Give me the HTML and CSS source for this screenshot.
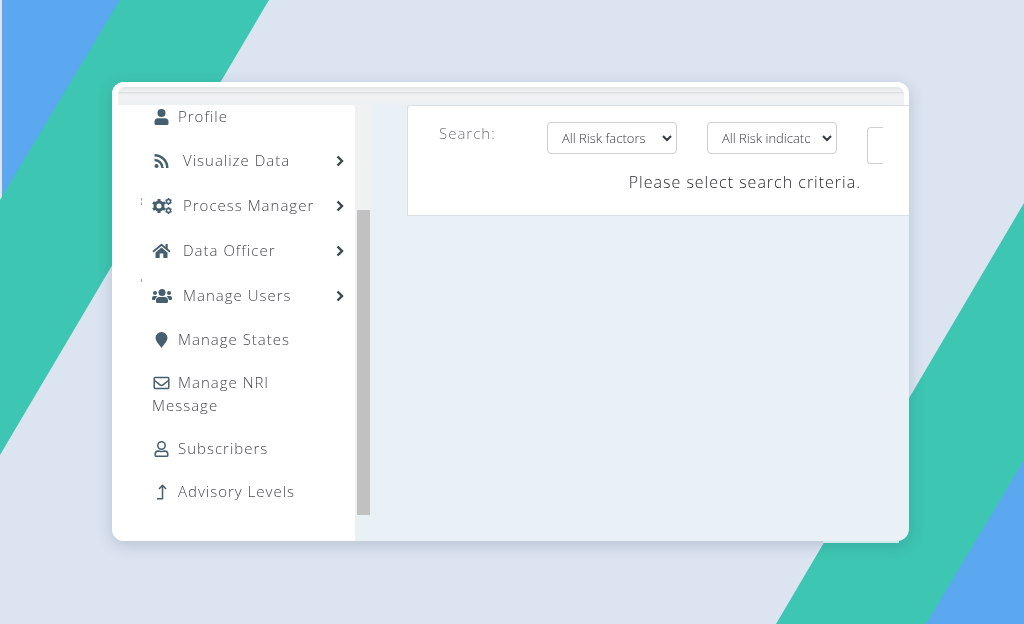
FILE: index.html
```html
<!DOCTYPE html>
<html lang="en">

<head>
  <meta charset="UTF-8">
  <meta name="viewport" content="width=device-width, initial-scale=1.0">
  <title>Risk Search</title>
  <link rel="stylesheet" href="styles.css">
</head>

<body>
  <svg class="backdrop" viewBox="0 0 1024 624" preserveAspectRatio="none" aria-hidden="true">
    <path fill="#5ba8f1" d="M2 0H121L2 201zM1024 459V624H925z"/>
    <path fill="#3dc6b1" d="M120 0H269L0 455V200zM1024 203V460L926 624H776z"/>
  </svg>

  <main class="window">
    <div class="window-top"></div>
    <div class="layout">
      <nav class="sidebar">
        <ul class="menu">
          <li>
            <a href="#profile"><svg class="icon" viewBox="0 0 20 16"><circle cx="9.500" cy="4" r="4"/><path d="M6 9.200h7a3.500 3.500 0 0 1 3.500 3.500v1.800a1.500 1.500 0 0 1-1.500 1.500h-11a1.500 1.500 0 0 1-1.500-1.500v-1.800a3.500 3.500 0 0 1 3.500-3.500z"/></svg>Profile</a>
          </li>
          <li>
            <button type="button"><svg class="icon" viewBox="0 0 20 16"><circle cx="4.500" cy="13" r="2"/><path class="line thick" d="M2.500 7a8 8 0 0 1 8 8M2.500 2.200a12.800 12.800 0 0 1 12.800 12.800"/></svg>Visualize Data<svg class="arrow" viewBox="0 0 8 12"><path d="M1.500 1.500L6 6l-4.500 4.500"/></svg></button>
          </li>
          <li class="mark">
            <button type="button"><svg class="icon" viewBox="0 0 20 16"><circle class="line gear" cx="7" cy="8" r="4"/><path class="line teeth" d="M7 1v2.500M7 12.500V15M1 4.500l2.200 1.300M10.800 10.200L13 11.500M1 11.500l2.200-1.300M10.800 5.800L13 4.500"/><circle class="line small" cx="16.500" cy="3.500" r="2"/><circle class="line small" cx="16.500" cy="12.500" r="2"/><path class="line small" d="M16.500 0v1M16.500 6v1M13.500 1.800l1 .6M18.500 4.600l1 .6M13.500 5.200l1-.6M18.500 2.400l1-.6M16.500 9v1M16.500 15v1M13.500 10.800l1 .6M18.500 13.600l1 .6M13.500 14.200l1-.6M18.500 11.400l1-.6"/></svg>Process Manager<svg class="arrow" viewBox="0 0 8 12"><path d="M1.500 1.500L6 6l-4.500 4.500"/></svg></button>
          </li>
          <li>
            <button type="button"><svg class="icon" viewBox="0 0 20 16"><path d="M9.500 4.500l6 5V14.500a.6.600 0 0 1-.6.600H11.300V10.500H7.700v4.600H4.100a.6.600 0 0 1-.6-.6v-5z"/><path class="line roof" d="M1 8.800L9.500 1.800l8.500 7"/><path d="M13.500 1h2.200v5.200L13.500 4.400z"/></svg>Data Officer<svg class="arrow" viewBox="0 0 8 12"><path d="M1.500 1.500L6 6l-4.500 4.500"/></svg></button>
          </li>
          <li class="mark low">
            <button type="button"><svg class="icon" viewBox="0 0 20 16"><circle cx="3" cy="5" r="2"/><circle cx="17" cy="5" r="2"/><circle cx="10" cy="4.500" r="3.500"/><path d="M7.500 9h5a3.500 3.500 0 0 1 3.500 3.500v1a1.500 1.500 0 0 1-1.500 1.500h-9a1.500 1.500 0 0 1-1.500-1.500v-1a3.500 3.500 0 0 1 3.500-3.500zM2 8h2a2 2 0 0 1 1.400.6A5.500 5.500 0 0 0 3 12H1a1 1 0 0 1-1-1v-1a2 2 0 0 1 2-2zM18 8h-2a2 2 0 0 0-1.400.6A5.500 5.500 0 0 1 17 12h2a1 1 0 0 0 1-1v-1a2 2 0 0 0-2-2z"/></svg>Manage Users<svg class="arrow" viewBox="0 0 8 12"><path d="M1.500 1.500L6 6l-4.500 4.500"/></svg></button>
          </li>
          <li>
            <a href="#states"><svg class="icon" viewBox="0 0 20 16"><path d="M9.500 16C8.500 14 3.500 9.500 3.500 6a6 6 0 0 1 12 0c0 3.500-5 8-6 10z"/></svg>Manage States</a>
          </li>
          <li>
            <a href="#message"><svg class="icon" viewBox="0 0 20 16"><rect class="line" x="2.200" y="2.500" width="14.600" height="11" rx="1"/><path class="line" d="M2.500 5.500l5.500 4.300a2.400 2.400 0 0 0 3 0L16.500 5.500"/></svg>Manage NRI Message</a>
          </li>
          <li>
            <a href="#subscribers"><svg class="icon" viewBox="0 0 20 16"><circle class="line" cx="9.500" cy="4.500" r="3.700"/><path class="line" d="M6.300 10c1.200 0 1.700.5 3.200.5s2-.5 3.200-.5a3.200 3.200 0 0 1 3.100 3.200v1.100a1 1 0 0 1-1 1H4.200a1 1 0 0 1-1-1v-1.100A3.200 3.200 0 0 1 6.300 10z"/></svg>Subscribers</a>
          </li>
          <li>
            <a href="#levels"><svg class="icon" viewBox="0 0 20 16"><path class="line" d="M5 14.700H10.500V1.500M7 5L10.500 1.300 14 5"/></svg>Advisory Levels</a>
          </li>
        </ul>
      </nav>
      <div class="scrollbar"><div class="thumb"></div></div>

      <section class="content">
        <form class="search-panel">
          <div class="filters">
            <label for="factor">Search:</label>
            <select id="factor">
              <option>All Risk factors</option>
            </select>
            <select id="indicator" aria-label="Risk indicator">
              <option>All Risk indicators</option>
            </select>
            <input type="text" aria-label="Keyword">
          </div>
          <p class="message">Please select search criteria.</p>
        </form>
      </section>
    </div>
  </main>
</body>

</html>
```
FILE: styles.css
```css
* {
  margin: 0;
  padding: 0;
  box-sizing: border-box;
  font-family: 'Open Sans', sans-serif;
}

body {
  background: #dce4f1;
  color: #44494d;
  font-weight: 300;
  min-height: 100vh;
  display: flex;
  padding: 82px 115px 83px 112px;
}

.backdrop {
  position: fixed;
  top: 0;
  left: 0;
  width: 100%;
  height: 100%;
  z-index: -1;
}

.window {
  position: relative;
  flex: 1;
  display: flex;
  flex-direction: column;
  background: #e9f1f7;
  border-radius: 12px;
  box-shadow: 0 4px 16px rgba(40, 60, 90, 0.2);
}

/* pale edge under the lower right corner */
.window::after {
  content: '';
  position: absolute;
  right: 10px;
  bottom: -2px;
  width: 76px;
  height: 2px;
  background: #cfe9ea;
}

.window-top {
  height: 23px;
  border: solid #fff;
  border-width: 5px 5px 0 6px;
  border-radius: 12px 12px 0 0;
  background: linear-gradient(#e3e6e6, #f0f2f2 5px, #dddfe0 5px, #dddfe0 6px, #f0f1f2 7px, #edf1f3);
}

.layout {
  flex: 1;
  display: flex;
}

.sidebar {
  flex: 0 0 243px;
  background: #fff;
  border-radius: 0 3px 0 12px;
  padding: 0 11px 26px 40px;
}

.menu {
  list-style: none;
}

.menu li {
  position: relative;
  padding: 10px 0;
}

.menu li:first-child {
  padding-top: 0;
}

.menu a,
.menu button {
  display: block;
  color: #44494d;
  font-size: 15px;
  font-weight: 300;
  line-height: 23px;
  letter-spacing: 1px;
  text-decoration: none;
}

.menu a {
  padding-right: 40px;
}

.menu button {
  display: flex;
  align-items: center;
  width: 100%;
  height: 25px;
  border: none;
  background: none;
  cursor: pointer;
}

.icon {
  width: 20px;
  height: 16px;
  margin-right: 6px;
  vertical-align: -3px;
  fill: #455f6e;
}

.menu button .icon {
  margin-right: 11px;
}

.line {
  fill: none;
  stroke: #455f6e;
  stroke-width: 1.5;
  stroke-linejoin: round;
}

.thick {
  stroke-width: 2.4;
}

.roof {
  stroke-width: 1.8;
}

.gear {
  stroke-width: 3;
}

.teeth {
  stroke-width: 3;
}

.small {
  stroke-width: 1.5;
}

.arrow {
  width: 8px;
  height: 12px;
  margin-left: auto;
  fill: none;
  stroke: #37474f;
  stroke-width: 2.4;
}

.mark::before {
  content: '';
  position: absolute;
  left: -11px;
  top: 15px;
  height: 7px;
  border-left: 1px dashed #9a9fa2;
}

.mark.low::before {
  top: 6px;
  height: 3px;
  border-left-style: solid;
}

.scrollbar {
  flex: 0 0 15px;
  display: flex;
  padding: 105px 0 26px 2px;
  background: linear-gradient(#f0f1f2 105px, #f0f1f2 410px, #e9f1f5 410px);
}

.thumb {
  flex: 1;
  background: #c1c1c1;
}

.content {
  flex: 1;
  min-width: 0;
  padding-left: 37px;
}

.search-panel {
  background: #fff;
  border: 1px solid #d9dfe3;
  border-right: none;
  border-radius: 3px 0 0 0;
  padding: 16px 24px 19px 31px;
}

.filters {
  display: flex;
  gap: 30px;
}

.filters label {
  width: 78px;
  color: #6f7477;
  font-size: 15px;
  line-height: 22px;
  letter-spacing: 1px;
}

.filters select {
  appearance: none;
  width: 130px;
  height: 32px;
  padding: 0 26px 0 14px;
  border: 1px solid #ced0d4;
  border-radius: 4px;
  color: #33383c;
  font-size: 13px;
  font-weight: 300;
  background: #fff url("data:image/svg+xml,%3Csvg xmlns='http://www.w3.org/2000/svg' viewBox='0 0 10 8'%3E%3Cpath d='M1 2l4 4 4-4' fill='none' stroke='%2333383c' stroke-width='2'/%3E%3C/svg%3E") no-repeat right 4px center / 10px 8px;
}

.filters input {
  width: 16px;
  height: 37px;
  margin-top: 5px;
  border: 1px solid #ced0d4;
  border-right: none;
  border-radius: 4px 0 0 4px;
}

.message {
  margin-top: 4px;
  padding-right: 24px;
  color: #1f2426;
  font-size: 16px;
  line-height: 28px;
  letter-spacing: 1px;
  text-align: right;
}
```
